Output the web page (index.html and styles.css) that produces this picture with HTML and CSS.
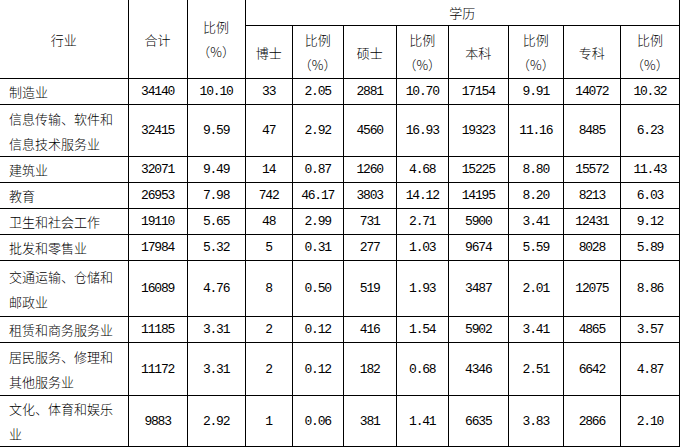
FILE: index.html
```html
<!DOCTYPE html>
<html>
<head>
<meta charset="utf-8">
<link rel="stylesheet" href="styles.css">
</head>
<body>
<table class="tbl">
<colgroup>
<col class="c-ind"><col class="c-tot"><col class="c-pct"><col class="c-phd"><col class="c-p2"><col class="c-ms"><col class="c-p3"><col class="c-bk"><col class="c-p4"><col class="c-zk"><col class="c-p5">
</colgroup>
<tr class="h1">
<td rowspan="2" class="first hd">行业</td>
<td rowspan="2" class="hd">合计</td>
<td rowspan="2" class="hd pct-h top">比例<br>（%）</td>
<td colspan="8" class="hd edu">学历</td>
</tr>
<tr class="h2">
<td class="hd">博士</td>
<td class="hd pct-h">比例<br>（%）</td>
<td class="hd">硕士</td>
<td class="hd pct-h">比例<br>（%）</td>
<td class="hd">本科</td>
<td class="hd pct-h">比例<br>（%）</td>
<td class="hd">专科</td>
<td class="hd pct-h">比例<br>（%）</td>
</tr>
<tr class="r26"><td class="first">制造业</td><td>34140</td><td>10.10</td><td>33</td><td>2.05</td><td>2881</td><td>10.70</td><td>17154</td><td>9.91</td><td>14072</td><td>10.32</td></tr>
<tr class="r52"><td class="first">信息传输、软件和<br>信息技术服务业</td><td>32415</td><td>9.59</td><td>47</td><td>2.92</td><td>4560</td><td>16.93</td><td>19323</td><td>11.16</td><td>8485</td><td>6.23</td></tr>
<tr class="r26"><td class="first">建筑业</td><td>32071</td><td>9.49</td><td>14</td><td>0.87</td><td>1260</td><td>4.68</td><td>15225</td><td>8.80</td><td>15572</td><td>11.43</td></tr>
<tr class="r26"><td class="first">教育</td><td>26953</td><td>7.98</td><td>742</td><td>46.17</td><td>3803</td><td>14.12</td><td>14195</td><td>8.20</td><td>8213</td><td>6.03</td></tr>
<tr class="r26"><td class="first">卫生和社会工作</td><td>19110</td><td>5.65</td><td>48</td><td>2.99</td><td>731</td><td>2.71</td><td>5900</td><td>3.41</td><td>12431</td><td>9.12</td></tr>
<tr class="r26"><td class="first">批发和零售业</td><td>17984</td><td>5.32</td><td>5</td><td>0.31</td><td>277</td><td>1.03</td><td>9674</td><td>5.59</td><td>8028</td><td>5.89</td></tr>
<tr class="r56"><td class="first">交通运输、仓储和<br>邮政业</td><td>16089</td><td>4.76</td><td>8</td><td>0.50</td><td>519</td><td>1.93</td><td>3487</td><td>2.01</td><td>12075</td><td>8.86</td></tr>
<tr class="r26"><td class="first">租赁和商务服务业</td><td>11185</td><td>3.31</td><td>2</td><td>0.12</td><td>416</td><td>1.54</td><td>5902</td><td>3.41</td><td>4865</td><td>3.57</td></tr>
<tr class="r53"><td class="first">居民服务、修理和<br>其他服务业</td><td>11172</td><td>3.31</td><td>2</td><td>0.12</td><td>182</td><td>0.68</td><td>4346</td><td>2.51</td><td>6642</td><td>4.87</td></tr>
<tr class="r51"><td class="first">文化、体育和娱乐<br>业</td><td>9883</td><td>2.92</td><td>1</td><td>0.06</td><td>381</td><td>1.41</td><td>6635</td><td>3.83</td><td>2866</td><td>2.10</td></tr>
</table>
</body>
</html>
```
FILE: styles.css
```css
html, body {
  margin: 0;
  padding: 0;
  background: #fff;
}
.tbl {
  border-collapse: collapse;
  table-layout: fixed;
  width: 680px;
  font-family: "Liberation Mono", "Noto Sans CJK SC", monospace;
  font-size: 13px;
  letter-spacing: -1.2px;
  color: #000;
}
.c-ind { width: 128px; }
.c-tot { width: 59px; }
.c-pct { width: 58px; }
.c-phd { width: 47px; }
.c-p2 { width: 51px; }
.c-ms { width: 53px; }
.c-p3 { width: 52px; }
.c-bk { width: 60px; }
.c-p4 { width: 55px; }
.c-zk { width: 57px; }
.c-p5 { width: 59px; }
.tbl td {
  border: 1px solid #000;
  padding: 0;
  text-align: center;
  vertical-align: middle;
  line-height: 25px;
  white-space: nowrap;
  overflow: hidden;
}
.tbl tr:first-child td {
  border-top: none;
}
.tbl td.first {
  border-left: none;
  text-align: left;
  padding-left: 9px;
  font-family: "Noto Sans CJK SC", sans-serif;
  font-weight: 300;
  letter-spacing: 0;
}
.tbl td.hd {
  font-family: "Noto Sans CJK SC", sans-serif;
  font-weight: 300;
  letter-spacing: 0;
}
.tbl td.first.hd {
  text-align: center;
  padding-left: 0;
}
.h1 { height: 25px; }
.h2 { height: 53px; }
.r26 { height: 26px; }
.r52 { height: 52px; }
.r56 { height: 56px; }
.r53 { height: 53px; }
.r51 { height: 51px; }
```
